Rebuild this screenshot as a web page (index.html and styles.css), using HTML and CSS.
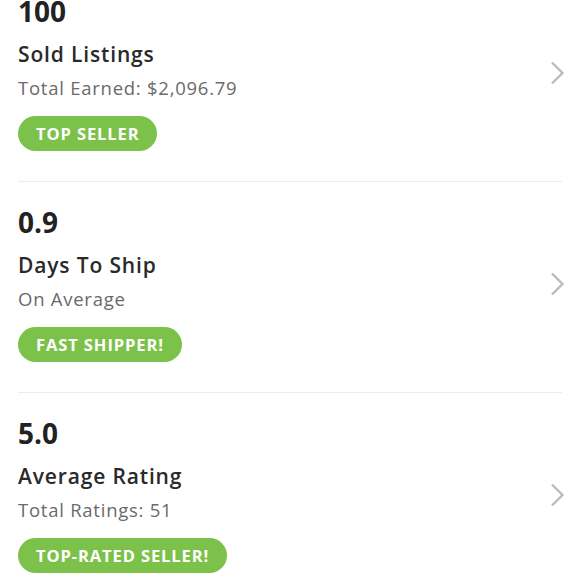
FILE: index.html
```html
<!DOCTYPE html>
<html lang="en">
<head>
    <meta charset="UTF-8">
    <meta name="viewport" content="width=device-width, initial-scale=1.0">
    <title>Seller Stats</title>
    <link rel="stylesheet" href="styles.css">
</head>
<body>
    <div class="stats">
        <div class="stat">
            <div class="stat-body">
                <div class="stat-value">100</div>
                <div class="stat-title">Sold Listings</div>
                <div class="stat-sub">Total Earned: $2,096.79</div>
                <span class="badge">Top Seller</span>
            </div>
            <svg class="chevron" width="16" height="24" viewBox="0 0 16 24"><path d="M2 1.5 L12.5 12 L2 22.5" /></svg>
        </div>
        <div class="stat">
            <div class="stat-body">
                <div class="stat-value">0.9</div>
                <div class="stat-title">Days To Ship</div>
                <div class="stat-sub">On Average</div>
                <span class="badge">Fast Shipper!</span>
            </div>
            <svg class="chevron" width="16" height="24" viewBox="0 0 16 24"><path d="M2 1.5 L12.5 12 L2 22.5" /></svg>
        </div>
        <div class="stat">
            <div class="stat-body">
                <div class="stat-value">5.0</div>
                <div class="stat-title">Average Rating</div>
                <div class="stat-sub">Total Ratings: 51</div>
                <span class="badge">Top-Rated Seller!</span>
            </div>
            <svg class="chevron" width="16" height="24" viewBox="0 0 16 24"><path d="M2 1.5 L12.5 12 L2 22.5" /></svg>
        </div>
    </div>
</body>
</html>
```

FILE: styles.css
```css
body {
    margin: 0;
    font-family: "Open Sans", Lato, Arial, sans-serif;
    background-color: #ffffff;
    color: #262626;
    overflow: hidden;
}
.stats {
    margin-top: -29px;
    padding: 0 18px;
}
.stat {
    display: flex;
    align-items: center;
    justify-content: space-between;
    padding: 24px 0 30px 0;
    border-bottom: 1px solid #ededed;
}
.stat-body {
    display: flex;
    flex-direction: column;
    align-items: flex-start;
}
.stat-value {
    font-size: 28px;
    line-height: 32px;
    font-weight: 700;
    color: #222222;
}
.stat-title {
    font-size: 21px;
    line-height: 26px;
    font-weight: 600;
    color: #2a2a2a;
    letter-spacing: 0.85px;
    margin-top: 14px;
}
.stat-sub {
    font-size: 18.5px;
    line-height: 24px;
    color: #6a6a6a;
    letter-spacing: 0.75px;
    margin-top: 9px;
}
.badge {
    margin-top: 16px;
    height: 35px;
    line-height: 35px;
    padding: 0 18px;
    border-radius: 18px;
    background-color: #7cc24a;
    color: #ffffff;
    font-size: 16.5px;
    font-weight: 700;
    text-transform: uppercase;
    letter-spacing: 0.9px;
}
.chevron {
    margin-right: -4px;
    fill: none;
    stroke: #bcbcbc;
    stroke-width: 2.4;
}
```
